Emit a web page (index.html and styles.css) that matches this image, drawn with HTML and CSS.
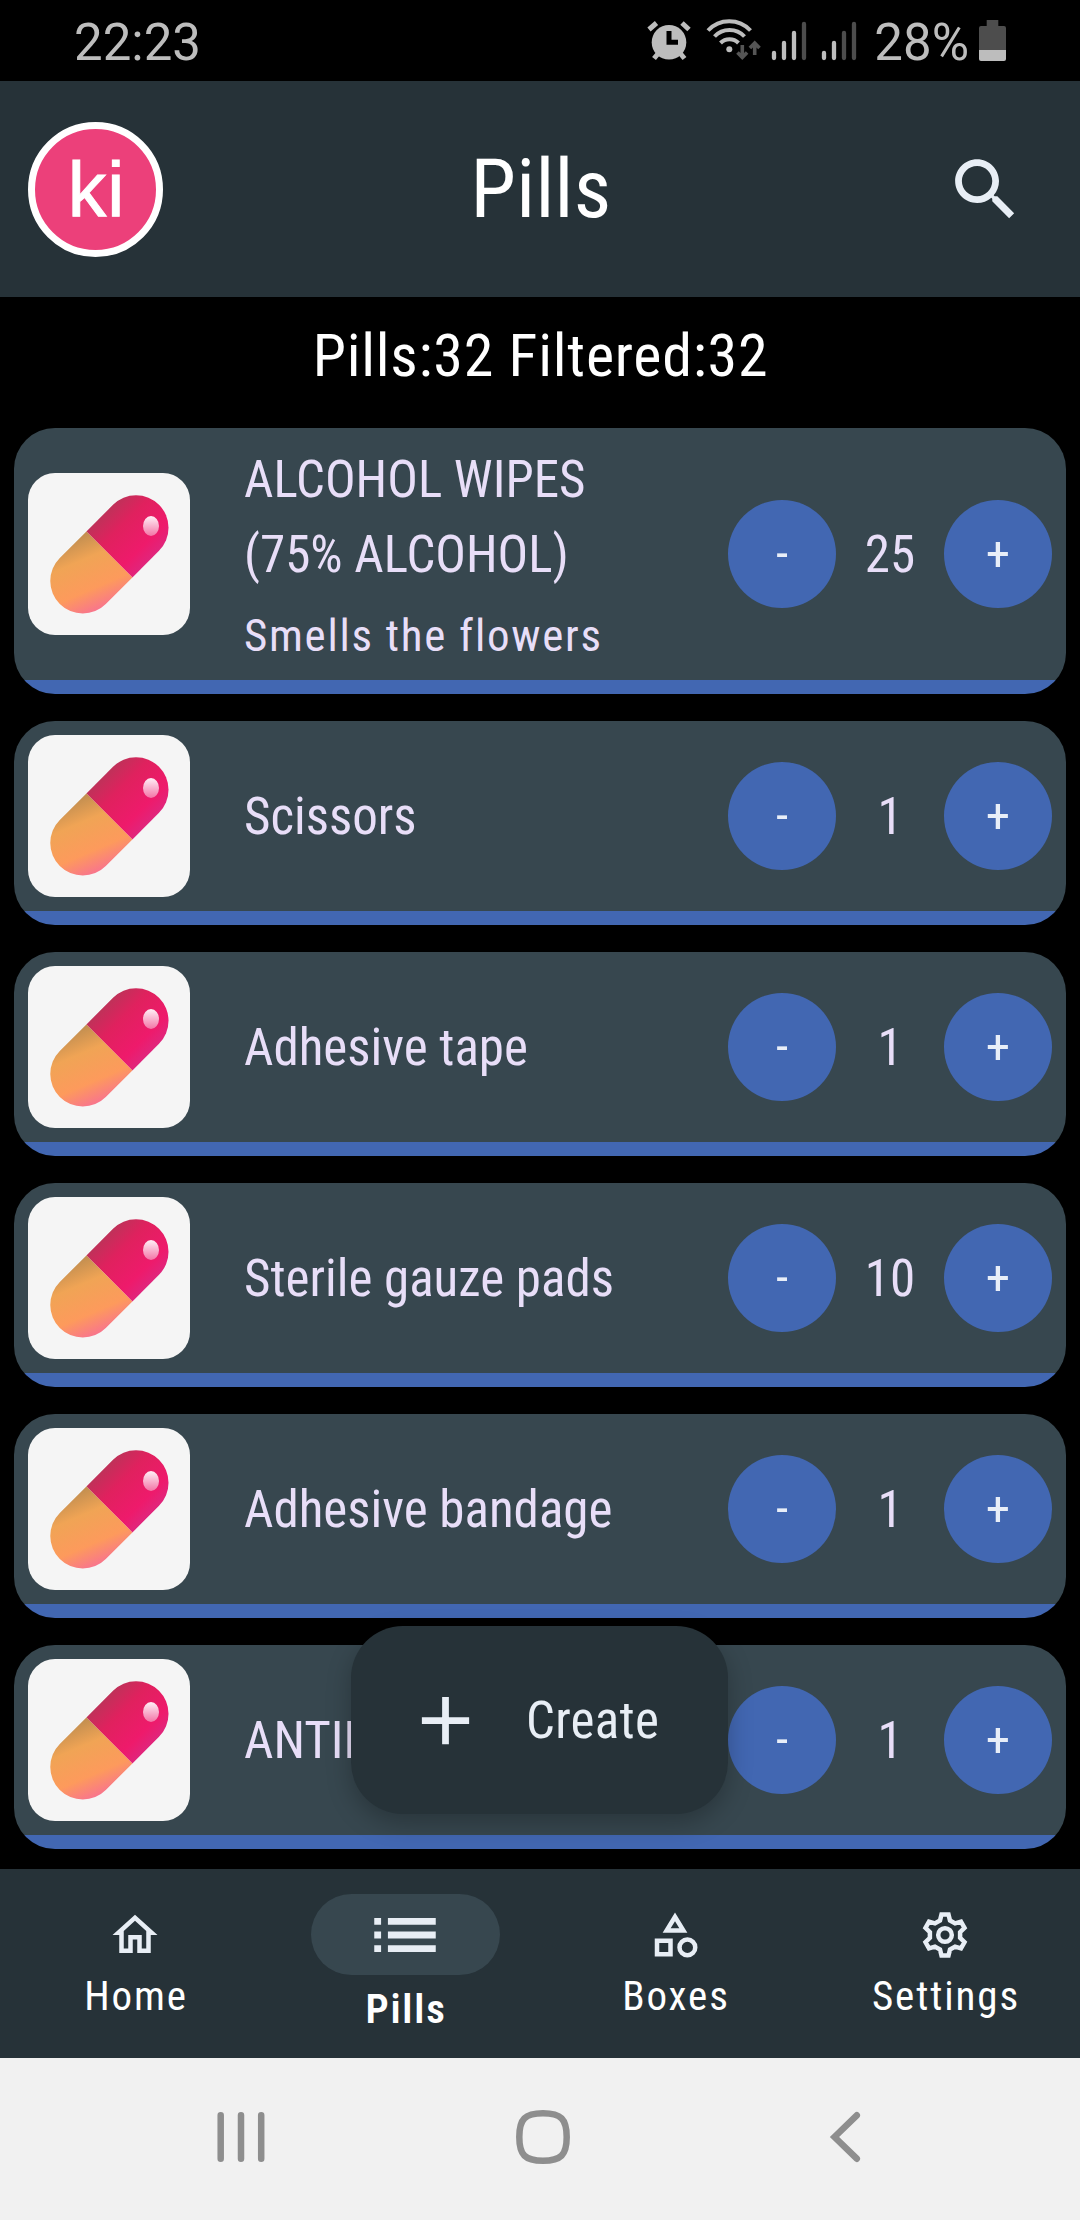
FILE: index.html
```
<!DOCTYPE html>
<html lang="en">
<head>
<meta charset="utf-8">
<title>Pills</title>
<link rel="stylesheet" href="styles.css">
</head>
<body>
<svg class="defs" aria-hidden="true">
  <defs>
    <linearGradient id="red" gradientUnits="userSpaceOnUse" x1="66" y1="44" x2="118" y2="96">
      <stop offset="0" stop-color="#b83558"/>
      <stop offset=".35" stop-color="#e0215e"/>
      <stop offset=".75" stop-color="#ee1a6b"/>
      <stop offset="1" stop-color="#dd2880"/>
    </linearGradient>
    <linearGradient id="orange" gradientUnits="userSpaceOnUse" x1="36" y1="70" x2="66" y2="140">
      <stop offset="0" stop-color="#c48f50"/>
      <stop offset=".3" stop-color="#f0a455"/>
      <stop offset=".7" stop-color="#fd9a5c"/>
      <stop offset="1" stop-color="#f8738f"/>
    </linearGradient>
    <linearGradient id="shine" x1="0" y1="0" x2="0" y2="1">
      <stop offset="0" stop-color="#fff0f6"/>
      <stop offset="1" stop-color="#f374a6"/>
    </linearGradient>
    <symbol id="pill" viewBox="0 0 162 162">
      <path fill="url(#red)" d="M58.400 58.400 85 31.800A32.500 32.500 0 0 1 131 77.800L104.400 104.400Z"/>
      <path fill="url(#orange)" d="M58.400 58.400 31.800 85A32.500 32.500 0 0 0 77.800 131L104.400 104.400Z"/>
      <ellipse cx="123" cy="53" rx="8" ry="10" fill="url(#shine)"/>
    </symbol>
  </defs>
</svg>

<div class="phone">
  <div class="status">
    <span class="clock">22:23</span>
    <svg class="alarm" width="45" height="81" viewBox="0 0 45 81">
      <circle cx="22" cy="42.300" r="17.300" fill="#bdbdbd"/>
      <path d="M2 29.500 9.500 23M35 23l7 6.500M7 58.500l5-6M37.500 58.500l-5-6" stroke="#bdbdbd" stroke-width="5" fill="none"/>
      <path d="M22 31v11.300h9" stroke="#000" stroke-width="5" fill="none"/>
    </svg>
    <svg class="wifi" width="56" height="81" viewBox="0 0 56 81">
      <g fill="none" stroke="#bdbdbd" stroke-width="4">
        <path d="M2 30.500a29 29 0 0 1 42.500 0"/>
        <path d="M8.500 36.500a20.500 20.500 0 0 1 30 0"/>
        <path d="M14.500 43a12.500 12.500 0 0 1 18 0"/>
      </g>
      <circle cx="23.300" cy="49.300" r="3" fill="#bdbdbd"/>
      <path d="M36.300 45v12M31.500 52.500l4.800 5 4.800-5M48.700 55V43.500M43.900 48l4.800-5 4.800 5" stroke="#555" stroke-width="3.600" fill="none"/>
    </svg>
    <svg class="signal" width="36" height="81" viewBox="0 0 36 81">
      <path d="M3 53v5M13 43v15M23 33v25" class="on"/>
      <path d="M33 24v34" class="off"/>
    </svg>
    <svg class="signal second" width="36" height="81" viewBox="0 0 36 81">
      <path d="M3 53v5M13 43v15" class="on"/>
      <path d="M23 33v25M33 24v34" class="off"/>
    </svg>
    <span class="percent">28%</span>
    <svg class="battery" width="27" height="81" viewBox="0 0 27 81">
      <path d="M7.700 20h11.600v6H25a2 2 0 0 1 2 2v22H0V28a2 2 0 0 1 2-2h5.700z" fill="#4d4d4d"/>
      <path d="M0 50h27v9a2 2 0 0 1-2 2H2a2 2 0 0 1-2-2z" fill="#bdbdbd"/>
    </svg>
  </div>

  <header class="header">
    <div class="avatar"><span>ki</span></div>
    <h1>Pills</h1>
    <svg class="search" width="81" height="81" viewBox="0 0 24 24"><path d="M15.500 14h-.79l-.28-.27C15.410 12.590 16 11.110 16 9.500 16 5.910 13.090 3 9.500 3S3 5.910 3 9.500 5.910 16 9.500 16c1.610 0 3.090-.59 4.230-1.570l.27.28v.79l5 4.990L20.490 19l-4.990-5zm-6 0C7.010 14 5 11.990 5 9.500S7.010 5 9.500 5 14 7.010 14 9.500 11.990 14 9.500 14z"/></svg>
  </header>

  <main class="content">
    <p class="summary">Pills:32 Filtered:32</p>
    <div class="list">
      <article class="card">
        <div class="thumb"><svg width="162" height="162"><use href="#pill"/></svg></div>
        <div class="info"><h2>ALCOHOL WIPES (75% ALCOHOL)</h2><p>Smells the flowers</p></div>
        <div class="stepper"><button>-</button><span>25</span><button>+</button></div>
      </article>
      <article class="card">
        <div class="thumb"><svg width="162" height="162"><use href="#pill"/></svg></div>
        <div class="info"><h2>Scissors</h2></div>
        <div class="stepper"><button>-</button><span>1</span><button>+</button></div>
      </article>
      <article class="card">
        <div class="thumb"><svg width="162" height="162"><use href="#pill"/></svg></div>
        <div class="info"><h2>Adhesive tape</h2></div>
        <div class="stepper"><button>-</button><span>1</span><button>+</button></div>
      </article>
      <article class="card">
        <div class="thumb"><svg width="162" height="162"><use href="#pill"/></svg></div>
        <div class="info"><h2>Sterile gauze pads</h2></div>
        <div class="stepper"><button>-</button><span>10</span><button>+</button></div>
      </article>
      <article class="card">
        <div class="thumb"><svg width="162" height="162"><use href="#pill"/></svg></div>
        <div class="info"><h2>Adhesive bandage</h2></div>
        <div class="stepper"><button>-</button><span>1</span><button>+</button></div>
      </article>
      <article class="card">
        <div class="thumb"><svg width="162" height="162"><use href="#pill"/></svg></div>
        <div class="info"><h2>ANTIBIOTIC</h2></div>
        <div class="stepper"><button>-</button><span>1</span><button>+</button></div>
      </article>
    </div>
    <button class="fab">
      <svg width="81" height="81" viewBox="0 0 24 24"><path d="M19 13h-6v6h-2v-6H5v-2h6V5h2v6h6z"/></svg>
      <span>Create</span>
    </button>
  </main>

  <nav class="tabs">
    <a class="tab">
      <svg width="54" height="54" viewBox="0 0 24 24"><path d="M12 5.690l5 4.500V18h-2v-6H9v6H7v-7.810l5-4.500M12 3 2 12h3v8h6v-6h2v6h6v-8h3z"/></svg>
      <span>Home</span>
    </a>
    <a class="tab active">
      <div class="indicator"><svg width="82" height="82" viewBox="0 0 24 24"><path d="M3 13h2v-2H3zm0 4h2v-2H3zm0-8h2V7H3zm4 4h14v-2H7zm0 4h14v-2H7zM7 7v2h14V7z"/></svg></div>
      <span>Pills</span>
    </a>
    <a class="tab">
      <svg width="54" height="54" viewBox="0 0 24 24"><path d="M12 2l-5.500 9h11zm0 3.840L13.930 9h-3.870zM17.500 13a4.500 4.500 0 1 0 0 9 4.500 4.500 0 0 0 0-9zm0 7a2.500 2.500 0 1 1 0-5 2.500 2.500 0 0 1 0 5zM3 21.500h8v-8H3zm2-6h4v4H5z"/></svg>
      <span>Boxes</span>
    </a>
    <a class="tab">
      <svg class="gear" width="54" height="54" viewBox="-27 -27 54 54"><path d="M-5-14.500-3.500-20.500H3.500L5-14.500 10.100-11.600 16-13.300 19.500-7.200 15.100-2.900V2.900L19.500 7.200 16 13.300 10.100 11.600 5 14.500 3.500 20.500H-3.500L-5 14.500-10.100 11.600-16 13.300-19.500 7.200-15.100 2.900V-2.900L-19.500-7.200-16-13.300-10.100-11.600Z"/><circle r="6.800"/></svg>
      <span>Settings</span>
    </a>
  </nav>

  <div class="system">
    <svg width="60" height="60" viewBox="0 0 60 60"><path d="M9.700 8.300v43.400M30 8.300v43.400M50.200 8.300v43.400"/></svg>
    <svg width="60" height="60" viewBox="0 0 60 60"><path d="M30 6.300c18 0 23.700 5.700 23.700 23.700S48 53.700 30 53.700 6.300 48 6.300 30 12 6.300 30 6.300z"/></svg>
    <svg width="60" height="60" viewBox="0 0 60 60"><path d="M41.800 8.300 19.500 30l22.300 21.700"/></svg>
  </div>
</div>
</body>
</html>
```
FILE: styles.css
```
* {
  box-sizing: border-box;
  margin: 0;
  padding: 0;
}

body {
  background: #000;
  font-family: "Roboto Condensed", Roboto, sans-serif;
  font-stretch: 75%;
}

svg {
  display: block;
  flex: none;
}

button {
  border: 0;
  font: inherit;
}

.defs {
  position: absolute;
  width: 0;
  height: 0;
}

.phone {
  display: flex;
  flex-direction: column;
  width: 1080px;
  height: 2220px;
  overflow: hidden;
}

/* Status bar */
.status {
  display: flex;
  align-items: center;
  height: 81px;
  padding: 0 74px;
  color: #bdbdbd;
  font-family: Roboto, sans-serif;
  font-size: 51px;
  font-stretch: 100%;
  line-height: 60px;
}

.clock,
.percent {
  padding-top: 5px;
}

.alarm { margin-left: auto; }
.wifi { margin-left: 14px; }
.signal { margin-left: 9px; }
.signal.second { margin-left: 14px; }
.percent { margin-left: 17px; }
.battery { margin-left: 10px; }

.signal path {
  fill: none;
  stroke-width: 4.300px;
  stroke-linecap: round;
}

.signal .on { stroke: #bdbdbd; }
.signal .off { stroke: #4d4d4d; }

/* App header */
.header {
  display: grid;
  grid-template-columns: 1fr auto 1fr;
  align-items: center;
  height: 216px;
  padding: 0 54px 0 56px;
  background: #263238;
}

.avatar {
  display: flex;
  align-items: center;
  justify-content: center;
  width: 135px;
  height: 135px;
  margin-left: -28px;
  border: 7px solid #fff;
  border-radius: 50%;
  background: #ec407a;
  color: #fff;
  font-family: "Liberation Sans", Arial, sans-serif;
  font-size: 77px;
  line-height: 80px;
  letter-spacing: 1px;
  -webkit-text-stroke: 1px #fff;
}

.avatar span {
  padding: 2px 0 0 2px;
}

.header h1 {
  color: #fff;
  font-size: 82px;
  font-weight: 400;
  letter-spacing: .3px;
}

.search {
  justify-self: end;
  fill: #e8eef5;
}

/* Pill list */
.content {
  position: relative;
  flex: none;
  height: 1572px;
  overflow: hidden;
}

.summary {
  height: 117px;
  color: #fff;
  font-size: 60px;
  line-height: 117px;
  letter-spacing: .78px;
  padding-left: 1px;
  text-align: center;
}

.list {
  display: flex;
  flex-direction: column;
  gap: 27px;
  padding: 14px;
}

.card {
  display: flex;
  align-items: center;
  flex: none;
  min-height: 204px;
  padding: 14px 14px 28px;
  border-radius: 41px;
  background: linear-gradient(#4267b2, #4267b2) bottom / 100% 14px no-repeat #37474f;
  color: #e8def8;
}

.thumb {
  flex: none;
  overflow: hidden;
  border-radius: 27px;
  background: #f5f5f5;
}

.info {
  flex: 1;
  padding-left: 54px;
  padding-right: 60px;
}

.info h2 {
  font-size: 51px;
  font-weight: 400;
  line-height: 75px;
}

.info p {
  margin-top: 14px;
  font-size: 45px;
  line-height: 60px;
  letter-spacing: 1.700px;
}

.stepper {
  display: flex;
  align-items: center;
  font-size: 51px;
}

.stepper button {
  width: 108px;
  height: 108px;
  border-radius: 50%;
  background: #4267b2;
  color: #e8eef8;
  font-size: 49px;
  line-height: 108px;
}

.stepper span {
  width: 108px;
  text-align: center;
}

.fab {
  position: absolute;
  left: 351px;
  bottom: 55px;
  display: flex;
  align-items: center;
  gap: 40px;
  width: 377px;
  height: 188px;
  padding-left: 54px;
  border-radius: 52px;
  background: #263238;
  box-shadow: 0 9px 24px rgba(0, 0, 0, .25);
  color: #e8eef5;
  fill: #e8eef5;
  font-size: 51px;
  letter-spacing: .3px;
}

/* Bottom tabs */
.tabs {
  display: grid;
  grid-template-columns: repeat(4, 1fr);
  flex: none;
  height: 189px;
  background: #263238;
}

.tab {
  display: flex;
  flex-direction: column;
  align-items: center;
  gap: 10px;
  padding-top: 39px;
  color: #fff;
  font-size: 41px;
  line-height: 48px;
  letter-spacing: 1.900px;
}

.tab svg {
  fill: #e8eef5;
}

.tab span {
  padding-left: 2px;
}

.tab .gear {
  fill: none;
  stroke: #e8eef5;
  stroke-width: 4.500px;
}

.tab.active {
  padding-top: 25px;
  font-weight: 600;
  letter-spacing: 1.800px;
}

.indicator {
  display: flex;
  align-items: center;
  justify-content: center;
  width: 189px;
  height: 81px;
  border-radius: 41px;
  background: #37474f;
}

/* System navigation */
.system {
  display: flex;
  align-items: center;
  flex: none;
  gap: 242px;
  height: 162px;
  padding: 0 0 4px 211px;
  background: #f1f1f1;
}

.system svg {
  fill: none;
  stroke: #8e8e8e;
  stroke-width: 6.500px;
  stroke-linecap: round;
}
```
